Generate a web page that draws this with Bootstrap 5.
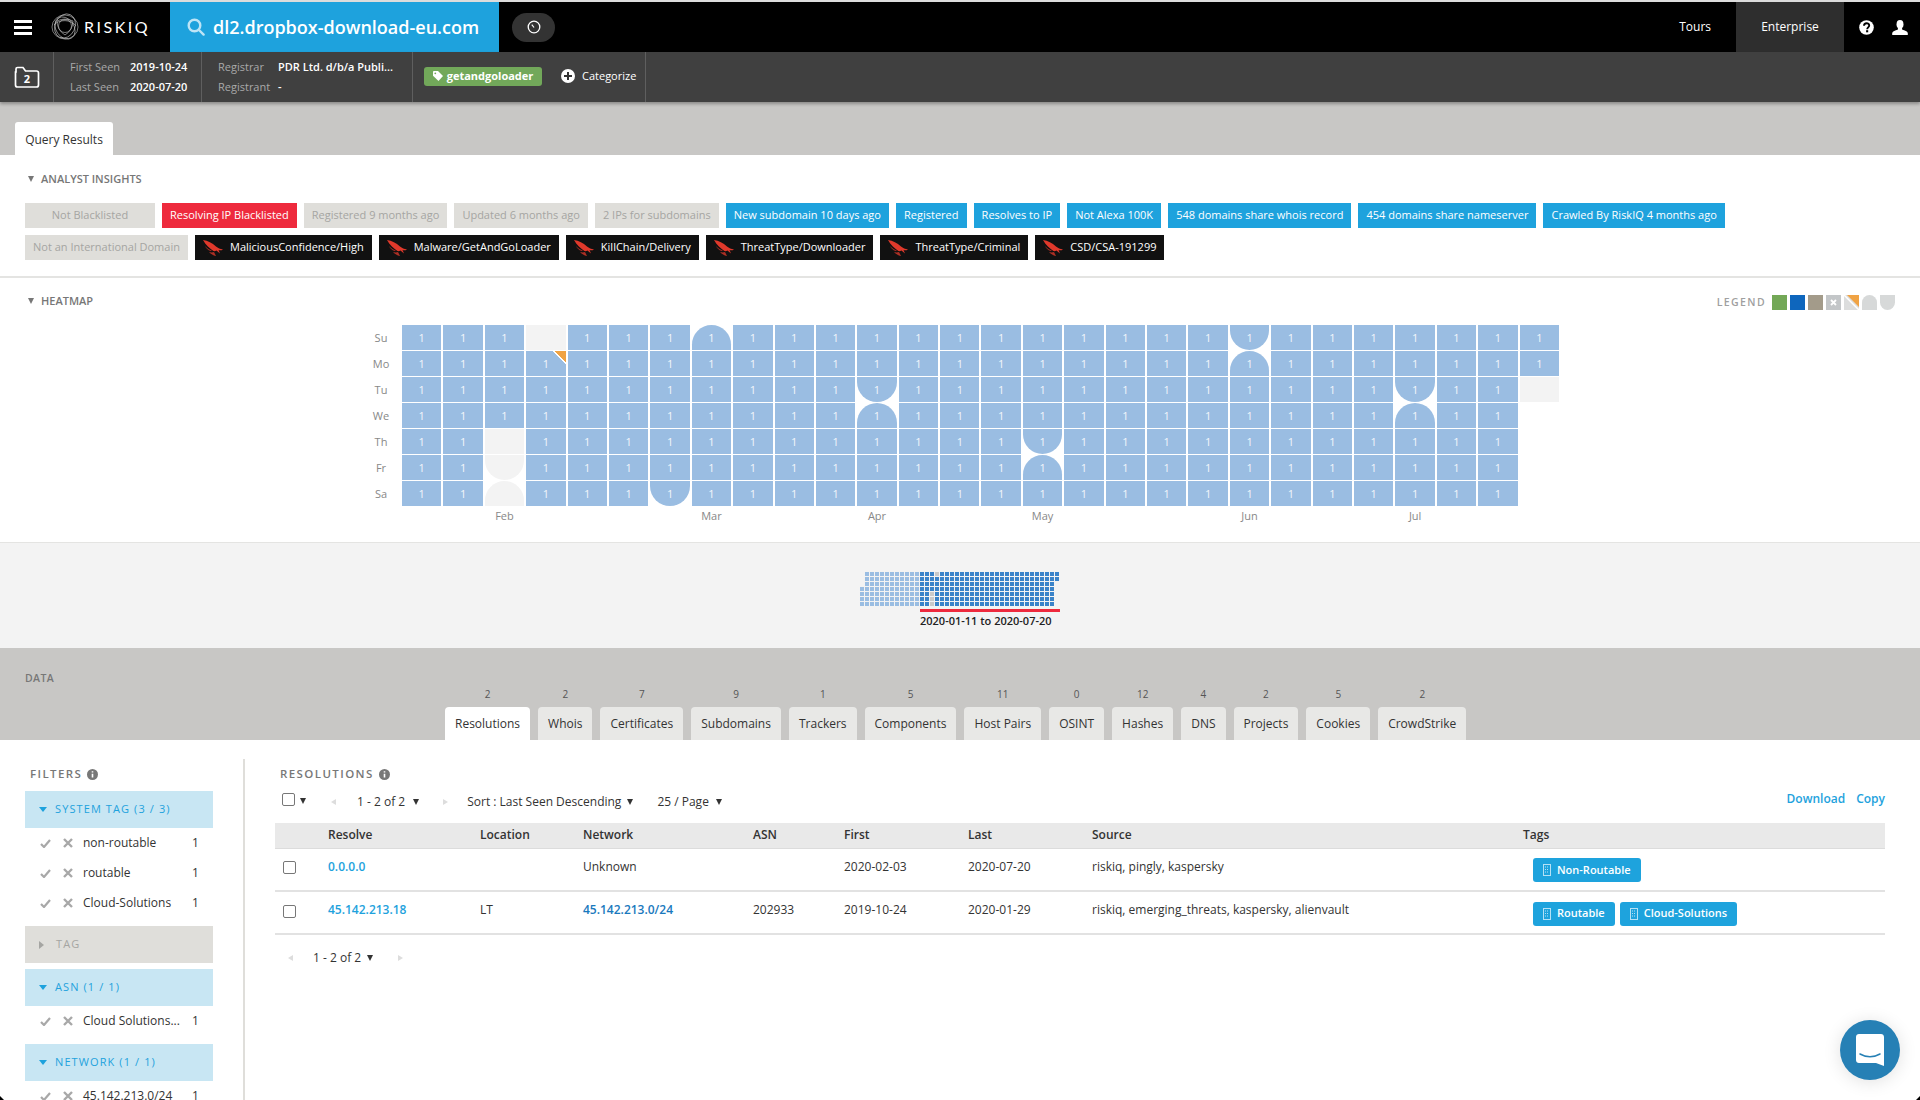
<!DOCTYPE html>
<html lang="en">
<head>
<meta charset="utf-8">
<title>RiskIQ - dl2.dropbox-download-eu.com</title>
<link rel="stylesheet" href="https://cdn.jsdelivr.net/npm/bootstrap@5.3.0/dist/css/bootstrap.min.css">
<style>
html,body{height:1100px;overflow:hidden}
body{font-family:"Open Sans","Liberation Sans",sans-serif;font-size:12px;color:#333;background:#fff;border-top:2px solid #dcdcdc}
a{text-decoration:none}
.tri-d,.tri-r,.tri-l{display:inline-block;width:0;height:0;flex:none}
.tri-d{border-left:3.5px solid transparent;border-right:3.5px solid transparent;border-top:6px solid #333}
.tri-r{border-top:3.5px solid transparent;border-bottom:3.5px solid transparent;border-left:5px solid #ddd}
.tri-l{border-top:3.5px solid transparent;border-bottom:3.5px solid transparent;border-right:5px solid #ddd}
.topbar{height:50px;background:#000;color:#fff}
.burger{width:18px;margin:0 19px 0 14px}
.burger span{display:block;height:3px;background:#fff;margin:3px 0}
.logo-word{font-family:Lato,"Liberation Sans",sans-serif;font-size:16px;font-weight:400;letter-spacing:2.5px;margin:0 21px 0 5px;width:65px;white-space:nowrap}
.searchbox{width:329px;height:50px;background:#1ea2dd;padding-left:17px;gap:8px;font-size:18px;font-weight:600;white-space:nowrap}
.clock-pill{width:43px;height:29px;border-radius:15px;background:#333;margin-left:13px}
.top-link{color:#fff;font-size:12px;height:50px}
.top-tours{margin-right:25px}
.top-ent{width:108px;background:#2e2e2e;margin-right:6px}
.top-ic{width:33px}
.subbar{height:50px;background:#404040;color:#fff;box-shadow:0 2px 3px rgba(0,0,0,.3);position:relative;font-size:11px}
.sub-cell{height:50px;border-right:1px solid #5f5f5f}
.sub-folder{width:54px}
.sub-seen{width:148px;padding-left:16px}
.sub-reg{width:211px;padding-left:16px}
.sub-tags{width:233px;padding:0 0 2px 11px}
.sub-row{line-height:20px;white-space:nowrap}
.sub-lab{color:#a9a9a9;display:inline-block}
.lab-seen{width:60px}
.lab-reg{width:60px}
.sub-val{font-weight:600}
.tag-green{background:#72a85a;color:#fff;font-weight:700;font-size:11px;border-radius:3px;width:118px;height:19px;gap:4px}
.catg{gap:7px;margin-left:19px}
.tabband{height:53px;background:#c8c7c5;padding:20px 0 0 15px}
.qtab{width:98px;height:33px;background:#fff;border-radius:3px 3px 0 0;font-size:12px;color:#333;padding-top:2px}
.sec-insight{height:123px;padding:17px 25px 0;border-bottom:2px solid #e4e4e2}
.sec-title{font-size:11px;font-weight:600;color:#777;gap:7px;line-height:14px}
.sec-title .tri-d{border-top-color:#777;margin-left:3px}
.pills{gap:7px;margin-top:17px;padding-right:150px}
.pill{height:25px;padding:0 8.05px;font-size:11px;white-space:nowrap;border-radius:0}
.pill-g{background:#dfdeda;color:#a5a5a2}
.pill-w{width:130px}
.pill-r{background:#ee2a3d;color:#fff}
.pill-b{background:#1ea2dd;color:#fff}
.pill-k{background:#111;color:#fff;gap:7px;padding-left:8px;padding-right:8px}
.sec-heat{height:264px;padding:14px 25px 0}
.legend-lab{font-size:10.5px;font-weight:600;letter-spacing:1.4px;color:#a0a0a0;margin-right:6px}
.legend{gap:3px}
.legend-row{margin-top:3px}
.lg{width:15px;height:15px;display:block}
.heat-wrap{margin-top:14px;margin-left:340px}
.day-col{width:37px;gap:1px}
.day-col div{height:25px;line-height:25px;color:#888;font-size:11px;text-align:center;width:24px;margin-left:4px}
.heat{display:grid;grid-template-columns:repeat(28,1fr);grid-template-rows:repeat(7,25px);grid-auto-flow:column;gap:1px 2px;width:1157px}
.hc{background:#9abde2;color:#f2f6fb;font-size:11px;line-height:25px;text-align:center;position:relative;overflow:hidden}
.hc.e{background:#f3f3f3}
.hc.n{background:transparent}
.hc.rb{border-radius:0 0 20px 20px}
.hc.rt{border-radius:20px 20px 0 0}
.corner-o{position:absolute;right:0;top:0;width:13px;height:13px;background:linear-gradient(45deg,transparent 47%,#fff 47%,#fff 56%,#f0a344 56%)}
.mo-row{display:grid;grid-template-columns:repeat(28,1fr);gap:0 2px;width:1157px;margin:0 0 0 37px;color:#888;font-size:11px;line-height:20px;text-align:center}
.mo-row span{white-space:nowrap}
.sec-time{height:106px;background:#f3f3f3;border-top:1px solid #e4e4e2;padding:29px 0 0 860px}
.mini{display:grid;grid-template-columns:repeat(40,4px);grid-template-rows:repeat(7,4px);grid-auto-flow:column;gap:1px;width:199px}
.mini i{display:block}
.mi-l{background:#9abde2}
.mi-d{background:#3a83c9}
.mi-g{background:#c9c9c9}
.time-line{height:3px;width:140px;background:#ee2a3d;margin:3px 0 1px 60px}
.time-txt{margin-left:60px;font-size:11px;font-weight:600;color:#222;white-space:nowrap;line-height:15px}
.databand{height:92px;background:#c8c7c5;position:relative;padding-left:445px}
.data-lab{position:absolute;left:25px;top:23px;color:#777;font-size:10.5px;font-weight:600;letter-spacing:.4px}
.dtabs{gap:8px;border:0;padding-top:40px;flex-wrap:nowrap;height:92px;align-items:flex-end}
.dtabs .nav-item{text-align:center;position:relative}
.dtabs .cnt{display:block;height:20px;font-size:10px;color:#555;line-height:14px}
.dtabs .nav-link{height:33px;line-height:33px;padding:0 10px;background:#e8e8e6;color:#333;font-size:12px;border:0;border-radius:4px 4px 0 0;margin:0;white-space:nowrap}
.dtabs .nav-link.active{background:#fff;color:#333}
.lower{height:360px}
.filt{width:245px;border-right:2px solid #dfdeda;padding:32px 30px 0 25px;margin-top:19px}
.filt-h{font-size:11.5px;font-weight:600;letter-spacing:1.4px;color:#777;gap:5px;padding-left:5px;line-height:18px;margin-top:-26px;margin-bottom:8px}
.fp{height:37px;background:#c8e6f3;color:#1ea2dd;font-size:11px;letter-spacing:1.1px;padding-left:13px;gap:8px;white-space:nowrap}
.fp .tri-d{border-left:4.5px solid transparent;border-right:4.5px solid transparent;border-top:5px solid #1ea2dd;margin-left:1px}
.fp.off{background:#dfdeda;color:#a5a5a2;margin-top:1px}
.fp.off .tri-r{border-top:4.5px solid transparent;border-bottom:4.5px solid transparent;border-left:5px solid #a5a5a2;margin-left:1px;margin-right:4px}
.fp.next{margin-top:6px}
.fr{height:30px;padding-left:15px;white-space:nowrap}
.fr svg{flex:none}
.fr .fx{margin-left:12px;margin-right:10px}
.fr .fn{width:109px;color:#333}
.fr .fc{color:#333}
.frs{margin-bottom:8px}
.res{width:1675px;padding:0 35px 0 30px;position:relative}
.res-h{font-size:11.5px;font-weight:600;letter-spacing:1.4px;color:#777;gap:5px;padding:25px 0 0 5px;line-height:18px}
.tools{height:40px;padding:0 0 2px 7px;font-size:12px;white-space:nowrap}
.cb{width:13px;height:13px;border:1px solid #777;border-radius:2px;background:#fff;display:inline-block;flex:none}
.tools .cb{margin-bottom:6px}
.tools .cb + .tri-d{margin:0 0 3px 5px}
.g25{margin-left:25px}.g21{margin-left:21px}.g19{margin-left:19px}.g24{margin-left:24px}.g8{margin-left:8px}.g6{margin-left:6px}.g7{margin-left:7px}
.dl{color:#1ea2dd;gap:11px;margin-left:auto;font-weight:600;margin-bottom:6px}
.dl a{color:#1ea2dd}
.rtable{table-layout:fixed;width:1610px;margin:0;font-size:12px;--bs-table-border-color:#e2e2e2}
.rtable col:nth-child(1){width:53px}.rtable col:nth-child(2){width:152px}.rtable col:nth-child(3){width:103px}.rtable col:nth-child(4){width:170px}.rtable col:nth-child(5){width:91px}.rtable col:nth-child(6){width:124px}.rtable col:nth-child(7){width:124px}.rtable col:nth-child(8){width:431px}.rtable col:nth-child(9){width:362px}
.rtable th{height:25px;padding:0;background:#e9e9e9;font-weight:600;color:#333;vertical-align:middle;border-bottom:1px solid #dcdcdc}
.rtable td{height:43px;padding:0 0 5px;vertical-align:middle;color:#333;border-bottom:2px solid #e2e2e2}
.rtable td.chk{padding:0 0 3px 8px}
.rtable td.tg{padding:2px 0 0 10px}
.rlink{color:#1ea2dd;font-weight:600}
.rlink2{color:#1a79bd;font-weight:600}
.tagb{display:inline-flex;align-items:center;gap:6px;height:24px;padding:0 10px 0 10px;background:#1ea3dd;color:#fff;font-size:11px;font-weight:600;border-radius:3px;margin-right:5px}
.pag2{height:46px;padding-left:13px}
.p2a{margin-left:20px}.p2b{margin-left:25px}.p2c{margin-left:6px}
.chat{position:fixed;left:1840px;top:1020px;width:60px;height:60px;border-radius:50%;background:#2680b5;box-shadow:0 2px 18px rgba(0,0,0,.12)}
.corner-bl,.corner-br{position:fixed;top:1096px;width:4px;height:4px;background:#000}
.corner-bl{left:0;clip-path:polygon(0 0,100% 100%,0 100%)}
.corner-br{left:1916px;clip-path:polygon(100% 0,100% 100%,0 100%)}
</style>
</head>
<body>

<nav class="topbar d-flex align-items-center">
  <div class="burger"><span></span><span></span><span></span></div>
  <svg width="28" height="28" viewBox="0 0 28 28" fill="none" stroke="#ccc" stroke-width=".6"><ellipse cx="14" cy="14" rx="13" ry="12"/><ellipse cx="14" cy="13" rx="10" ry="12.5" transform="rotate(25 14 13)"/><ellipse cx="14" cy="15" rx="9" ry="12" transform="rotate(-35 14 15)"/><path d="M6 8 Q14 4 22 8 Q22 17 14 22 Q6 17 6 8Z"/><circle cx="14" cy="13" r="6.5"/><path d="M3 12c5-6 17-6 22 1"/></svg>
  <div class="logo-word">RISKIQ</div>
  <div class="searchbox d-flex align-items-center">
    <svg width="18" height="18" viewBox="0 0 18 18" fill="none" stroke="#bde4f6" stroke-width="2.4"><circle cx="7.5" cy="7.5" r="5.8"/><path d="M12 12l4.6 4.6" stroke-linecap="round"/></svg>
    <span>dl2.dropbox-download-eu.com</span>
  </div>
  <div class="clock-pill d-flex align-items-center justify-content-center">
    <svg width="14" height="14" viewBox="0 0 14 14" fill="none" stroke="#fff" stroke-width="1.3"><circle cx="7" cy="7" r="5.8"/><path d="M7 7.5L4.8 4.6" stroke-width="1.2"/></svg>
  </div>
  <div class="ms-auto d-flex align-items-center">
    <a class="top-link top-tours d-flex align-items-center" href="#">Tours</a>
    <a class="top-link top-ent d-flex align-items-center justify-content-center" href="#">Enterprise</a>
    <span class="top-ic d-flex justify-content-center">
      <svg width="15" height="15" viewBox="0 0 15 15"><circle cx="7.5" cy="7.5" r="7.3" fill="#fff"/><path d="M5 5.7c0-3.2 5.2-3.2 5.2-.2 0 1.9-2 1.800-2 3.700" fill="none" stroke="#000" stroke-width="1.9"/><rect x="7.100" y="10.200" width="2.100" height="2.100" fill="#000"/></svg>
    </span>
    <span class="top-ic d-flex justify-content-center me-1">
      <svg width="16" height="15" viewBox="0 0 16 15" fill="#fff"><ellipse cx="8" cy="4.300" rx="3.500" ry="4.300"/><path d="M6 8h4l.3 1.800c2.500.8 5 1.400 5.500 3.200v2H.2v-2c.5-1.800 3-2.400 5.500-3.200z"/></svg>
    </span>
  </div>
</nav>

<div class="subbar d-flex">
  <div class="sub-cell sub-folder d-flex align-items-center justify-content-center">
    <svg width="26" height="22" viewBox="0 0 26 22"><path d="M2 6V3c0-1 .5-1.500 1.500-1.500h5.500l2.500 3.500h11c1 0 2 1 2 2V19c0 1-1 2-2 2H3.500C2.500 21 1.500 20 1.500 19V6z" fill="none" stroke="#fff" stroke-width="1.700"/><text x="13" y="17" font-size="11" font-weight="700" text-anchor="middle" fill="#fff" font-family="Open Sans, sans-serif">2</text></svg>
  </div>
  <div class="sub-cell sub-seen d-flex flex-column justify-content-center">
    <div class="sub-row"><span class="sub-lab lab-seen">First Seen</span><span class="sub-val">2019-10-24</span></div>
    <div class="sub-row"><span class="sub-lab lab-seen">Last Seen</span><span class="sub-val">2020-07-20</span></div>
  </div>
  <div class="sub-cell sub-reg d-flex flex-column justify-content-center">
    <div class="sub-row"><span class="sub-lab lab-reg">Registrar</span><span class="sub-val">PDR Ltd. d/b/a Publi...</span></div>
    <div class="sub-row"><span class="sub-lab lab-reg">Registrant</span><span class="sub-val">-</span></div>
  </div>
  <div class="sub-cell sub-tags d-flex align-items-center">
    <span class="tag-green d-inline-flex align-items-center justify-content-center">
      <svg width="10" height="10" viewBox="0 0 10 10" fill="#fff"><path d="M0 1.200C0 .5.500 0 1.200 0H5l5 5-4.500 5L0 4.800z"/><circle cx="2.300" cy="2.300" r=".9" fill="#72a85a"/></svg>getandgoloader</span>
    <span class="catg d-inline-flex align-items-center">
      <svg width="14" height="14" viewBox="0 0 14 14"><circle cx="7" cy="7" r="7" fill="#fff"/><path d="M7 3v8M3 7h8" stroke="#333" stroke-width="2"/></svg>Categorize</span>
  </div>
</div>

<div class="tabband"><div class="qtab d-flex align-items-center justify-content-center">Query Results</div></div>

<section class="sec-insight">
  <div class="sec-title d-flex align-items-center"><i class="tri-d"></i>ANALYST INSIGHTS</div>
  <div class="pills d-flex flex-wrap" id="pills">
    <span class="pill pill-g pill-w d-inline-flex align-items-center justify-content-center">Not Blacklisted</span>
    <span class="pill pill-r d-inline-flex align-items-center">Resolving IP Blacklisted</span>
    <span class="pill pill-g d-inline-flex align-items-center">Registered 9 months ago</span>
    <span class="pill pill-g d-inline-flex align-items-center">Updated 6 months ago</span>
    <span class="pill pill-g d-inline-flex align-items-center">2 IPs for subdomains</span>
    <span class="pill pill-b d-inline-flex align-items-center">New subdomain 10 days ago</span>
    <span class="pill pill-b d-inline-flex align-items-center">Registered</span>
    <span class="pill pill-b d-inline-flex align-items-center">Resolves to IP</span>
    <span class="pill pill-b d-inline-flex align-items-center">Not Alexa 100K</span>
    <span class="pill pill-b d-inline-flex align-items-center">548 domains share whois record</span>
    <span class="pill pill-b d-inline-flex align-items-center">454 domains share nameserver</span>
    <span class="pill pill-b d-inline-flex align-items-center">Crawled By RiskIQ 4 months ago</span>
    <span class="pill pill-g d-inline-flex align-items-center">Not an International Domain</span>
  </div>
</section>

<section class="sec-heat">
  <div class="d-flex justify-content-between align-items-center">
    <div class="sec-title d-flex align-items-center"><i class="tri-d"></i>HEATMAP</div>
    <div class="legend-row d-flex align-items-center">
      <span class="legend-lab">LEGEND</span>
      <span class="legend d-flex">
        <i class="lg" style="background:#73a857"></i><i class="lg" style="background:#0e66bd"></i><i class="lg" style="background:#a39b8a"></i>
        <svg class="lg" viewBox="0 0 15 15"><rect width="15" height="15" fill="#c3c6c8"/><path d="M5 5l5 5M10 5l-5 5" stroke="#fff" stroke-width="1.800"/></svg>
        <svg class="lg" viewBox="0 0 15 15"><rect width="15" height="15" fill="#dcdddd"/><path d="M0 0L15 15" stroke="#fff" stroke-width="1.500"/><path d="M3 0H15V12z" fill="#f0a344"/></svg>
        <svg class="lg" viewBox="0 0 15 15"><path d="M0 15V7.500a7.500 7.500 0 0 1 15 0V15z" fill="#d7d9d9"/></svg>
        <svg class="lg" viewBox="0 0 15 15"><path d="M0 0V7.500a7.500 7.500 0 0 0 15 0V0z" fill="#d7d9d9"/></svg>
      </span>
    </div>
  </div>
  <div class="heat-wrap">
    <div class="d-flex">
      <div class="day-col d-flex flex-column"><div>Su</div><div>Mo</div><div>Tu</div><div>We</div><div>Th</div><div>Fr</div><div>Sa</div></div>
      <div class="heat" id="heat"></div>
    </div>
    <div class="mo-row" id="months"></div>
  </div>
</section>

<section class="sec-time">
  <div class="mini" id="mini"></div>
  <div class="time-line"></div>
  <div class="time-txt">2020-01-11 to 2020-07-20</div>
</section>

<section class="databand">
  <span class="data-lab">DATA</span>
  <ul class="nav nav-tabs dtabs" id="dtabs"></ul>
</section>

<div class="lower d-flex">
  <aside class="filt">
    <div class="filt-h d-flex align-items-center">FILTERS <svg width="11" height="11" viewBox="0 0 11 11"><circle cx="5.500" cy="5.500" r="5.500" fill="#777"/><path d="M5.500 4.700v3.800M5.500 2.200v1.400" stroke="#fff" stroke-width="1.600"/></svg></div>
    <div class="fp d-flex align-items-center"><i class="tri-d"></i>SYSTEM TAG (3 / 3)</div>
    <div class="frs" data-f="non-routable|routable|Cloud-Solutions"></div>
    <div class="fp off d-flex align-items-center"><i class="tri-r"></i>TAG</div>
    <div class="fp next d-flex align-items-center"><i class="tri-d"></i>ASN (1 / 1)</div>
    <div class="frs" data-f="Cloud Solutions..."></div>
    <div class="fp d-flex align-items-center"><i class="tri-d"></i>NETWORK (1 / 1)</div>
    <div class="frs" data-f="45.142.213.0/24"></div>
  </aside>
  <main class="res">
    <div class="res-h d-flex align-items-center">RESOLUTIONS <svg width="11" height="11" viewBox="0 0 11 11"><circle cx="5.500" cy="5.500" r="5.500" fill="#777"/><path d="M5.500 4.700v3.800M5.500 2.200v1.400" stroke="#fff" stroke-width="1.600"/></svg></div>
    <div class="tools d-flex align-items-center">
      <span class="cb"></span><i class="tri-d"></i>
      <i class="tri-l g25"></i><span class="g21">1 - 2 of 2</span><i class="tri-d g8"></i>
      <i class="tri-r g24"></i><span class="g19">Sort : Last Seen Descending</span><i class="tri-d g6"></i>
      <span class="g24">25 / Page</span><i class="tri-d g7"></i>
      <span class="dl d-flex"><a href="#">Download</a><a href="#">Copy</a></span>
    </div>
    <table class="table rtable">
      <colgroup><col><col><col><col><col><col><col><col><col></colgroup>
      <thead><tr><th></th><th>Resolve</th><th>Location</th><th>Network</th><th>ASN</th><th>First</th><th>Last</th><th>Source</th><th>Tags</th></tr></thead>
      <tbody>
        <tr><td class="chk"><span class="cb d-block"></span></td><td><a class="rlink" href="#">0.0.0.0</a></td><td></td><td>Unknown</td><td></td><td>2020-02-03</td><td>2020-07-20</td><td>riskiq, pingly, kaspersky</td>
          <td class="tg"><a class="tagb" href="#"><svg width="8" height="12" viewBox="0 0 8 12" fill="none" stroke="#b5e1f5"><rect x=".5" y=".5" width="7" height="11"/><path d="M2 3h4M2 5.500h4M2 8h4" stroke-dasharray="1 1"/></svg>Non-Routable</a></td></tr>
        <tr><td class="chk"><span class="cb d-block"></span></td><td><a class="rlink" href="#">45.142.213.18</a></td><td>LT</td><td><a class="rlink2" href="#">45.142.213.0/24</a></td><td>202933</td><td>2019-10-24</td><td>2020-01-29</td><td>riskiq, emerging_threats, kaspersky, alienvault</td>
          <td class="tg"><a class="tagb" href="#"><svg width="8" height="12" viewBox="0 0 8 12" fill="none" stroke="#b5e1f5"><rect x=".5" y=".5" width="7" height="11"/><path d="M2 3h4M2 5.500h4M2 8h4" stroke-dasharray="1 1"/></svg>Routable</a><a class="tagb" href="#"><svg width="8" height="12" viewBox="0 0 8 12" fill="none" stroke="#b5e1f5"><rect x=".5" y=".5" width="7" height="11"/><path d="M2 3h4M2 5.500h4M2 8h4" stroke-dasharray="1 1"/></svg>Cloud-Solutions</a></td></tr>
      </tbody>
    </table>
    <div class="pag2 d-flex align-items-center">
      <i class="tri-l"></i><span class="p2a">1 - 2 of 2</span><i class="tri-d p2c"></i><i class="tri-r p2b"></i>
    </div>
  </main>
</div>

<div class="chat d-flex align-items-center justify-content-center">
  <svg width="28" height="32" viewBox="0 0 28 32"><path d="M3 0h22c1.700 0 3 1.300 3 3v29l-8-3H3c-1.700 0-3-1.300-3-3V3C0 1.300 1.300 0 3 0z" fill="#fff"/><path d="M4 20c6 3.500 14 3.500 20 0" fill="none" stroke="#2680b5" stroke-width="1.500" stroke-linecap="round"/></svg>
</div>
<i class="corner-bl"></i><i class="corner-br"></i>

<script>
var falcon='<svg width="20" height="16" viewBox="0 0 20 16" fill="#e0392b"><path d="M0 0C5 .5 9 3 13 6.500c2 1.500 4 2.500 7 3-1.500 1-3 1-4.500 .6l1.500 3.400-3.500-3c-1 .5-2 1-3 .6C7 8.500 2.500 5 0 0z"/><path d="M2 6c2 2 4 3.500 7 4.500l-1.500 .6C5 10 3 8.500 2 6z" opacity=".7"/><path d="M6 12c2 .5 3.500.5 5 0l2 4c-3-.5-5-2-7-4z" opacity=".75"/></svg>';
var pills=document.getElementById('pills');
['MaliciousConfidence/High','Malware/GetAndGoLoader','KillChain/Delivery','ThreatType/Downloader','ThreatType/Criminal','CSD/CSA-191299'].forEach(function(t){
  var s=document.createElement('span');s.className='pill pill-k d-inline-flex align-items-center';s.innerHTML=falcon+'<span>'+t+'</span>';pills.appendChild(s);
});
var heat=document.getElementById('heat'),spec={
 '2,4':'e','2,5':'e rb','2,6':'e rt','3,0':'e','6,6':'rb','7,0':'rt','11,2':'rb','11,3':'rt','15,4':'rb','15,5':'rt','20,0':'rb','20,1':'rt','24,2':'rb','24,3':'rt','27,2':'e','27,3':'n','27,4':'n','27,5':'n','27,6':'n'};
for(var c=0;c<28;c++)for(var r=0;r<7;r++){
  var d=document.createElement('div'),k=spec[c+','+r]||'';
  d.className='hc '+k;
  if(k.indexOf('e')<0&&k!=='n')d.textContent='1';
  if(c===3&&r===1)d.innerHTML='1<span class="corner-o"></span>';
  heat.appendChild(d);
}
var mos={2:'Feb',7:'Mar',11:'Apr',15:'May',20:'Jun',24:'Jul'},mh='';
for(var i=0;i<28;i++)mh+='<span>'+(mos[i]||'')+'</span>';
document.getElementById('months').innerHTML=mh;
var mini=document.getElementById('mini'),mh2='';
for(var c2=0;c2<40;c2++)for(var r2=0;r2<7;r2++){
  var cl=c2<12?'mi-l':'mi-d';
  if((c2===0&&r2<3)||(c2===39&&r2>1))cl='';
  if((c2===14&&r2>3)||(c2===15&&r2===0))cl='mi-g';
  mh2+='<i class="'+cl+'"></i>';
}
mini.innerHTML=mh2;
var tabs=[['Resolutions',2],['Whois',2],['Certificates',7],['Subdomains',9],['Trackers',1],['Components',5],['Host Pairs',11],['OSINT',0],['Hashes',12],['DNS',4],['Projects',2],['Cookies',5],['CrowdStrike',2]],th='';
tabs.forEach(function(t,i){th+='<li class="nav-item"><span class="cnt">'+t[1]+'</span><a class="nav-link'+(i?'':' active')+'" href="#">'+t[0]+'</a></li>';});
document.getElementById('dtabs').innerHTML=th;
var ck='<svg width="11" height="9" viewBox="0 0 11 9" fill="none" stroke="#a8a8a8" stroke-width="2.200"><path d="M1 5l3 3 6-7"/></svg>',xx='<svg class="fx" width="10" height="10" viewBox="0 0 10 10" fill="none" stroke="#a8a8a8" stroke-width="2.400"><path d="M1 1l8 8M9 1l-8 8"/></svg>';
document.querySelectorAll('.frs').forEach(function(b){
  b.innerHTML=b.dataset.f.split('|').map(function(n){return '<div class="fr d-flex align-items-center">'+ck+xx+'<span class="fn">'+n+'</span><span class="fc">1</span></div>';}).join('');
});
</script>
<script src="https://cdn.jsdelivr.net/npm/bootstrap@5.3.0/dist/js/bootstrap.bundle.min.js"></script>
</body>
</html>
